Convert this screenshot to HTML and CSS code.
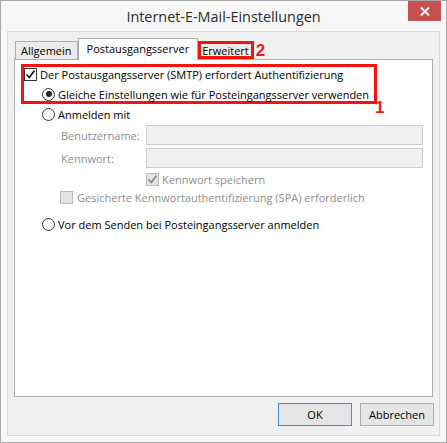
FILE: index.html
```html
<!DOCTYPE html>
<html lang="de">
    <head>
        <meta charset="UTF-8" />
        <title>Internet-E-Mail-Einstellungen</title>
        <link rel="stylesheet" href="styles.css">
    </head>
    <body>
        <div class="fenster">
            <div class="titel">
                <span></span>
                <span class="titel-text">Internet-E-Mail-Einstellungen</span>
                <span class="schliessen">
                    <svg width="10" height="9" viewBox="0 0 10 9"><path d="M1 0.5 L9 8.5 M9 0.5 L1 8.5" stroke="#fff" stroke-width="1.8" fill="none"/></svg>
                </span>
            </div>
            <div class="inhalt">
                <div class="reiter">
                    <div class="tab">Allgemein</div>
                    <div class="tab aktiv">Postausgangsserver</div>
                    <div class="tab markiert">Erweitert</div>
                    <span class="nummer nummer-2">2</span>
                </div>

                <div class="seite">
                    <div class="rahmen">
                        <div class="zeile">
                            <span class="check an"><svg width="11" height="11" viewBox="0 0 11 11"><path d="M1.5 5.5 L4.3 8.5 L9.5 1.5" stroke="#111" stroke-width="1.7" fill="none"/></svg></span>
                            Der Postausgangsserver (SMTP) erfordert Authentifizierung
                        </div>
                        <div class="zeile einzug">
                            <span class="radio an"></span>
                            Gleiche Einstellungen wie für Posteingangsserver verwenden
                        </div>
                        <span class="nummer nummer-1">1</span>
                    </div>

                    <div class="zeile option">
                        <span class="radio"></span>
                        Anmelden mit
                    </div>

                    <div class="feld erstes">
                        <span class="feld-name">Benutzername:</span>
                        <span class="eingabe"></span>
                    </div>
                    <div class="feld">
                        <span class="feld-name">Kennwort:</span>
                        <span class="eingabe"></span>
                    </div>

                    <div class="zeile inaktiv speichern">
                        <span class="check aus-grau"><svg width="11" height="11" viewBox="0 0 11 11"><path d="M1.5 5.5 L4.3 8.5 L9.5 1.5" stroke="#8a8a8a" stroke-width="1.7" fill="none"/></svg></span>
                        Kennwort speichern
                    </div>
                    <div class="zeile inaktiv spa">
                        <span class="check aus-grau"></span>
                        Gesicherte Kennwortauthentifizierung (SPA) erforderlich
                    </div>

                    <div class="zeile option vorher">
                        <span class="radio"></span>
                        Vor dem Senden bei Posteingangsserver anmelden
                    </div>
                </div>

                <div class="knoepfe">
                    <button class="knopf standard">OK</button>
                    <button class="knopf">Abbrechen</button>
                </div>
            </div>
        </div>
    </body>
</html>
```

FILE: styles.css
```css
body {
    margin: 0;
    font-family: "Open Sans", "Noto Sans", sans-serif;
    font-size: 11px;
    background: #fff;
}

.fenster {
    width: 447px;
    height: 443px;
    box-sizing: border-box;
    border: 1px solid #a9a9a9;
    background: #f7f7f7;
    padding: 0 6px 6px 6px;
    display: flex;
    flex-direction: column;
}

.titel {
    height: 30px;
    display: grid;
    grid-template-columns: 1fr auto 1fr;
    align-items: start;
}
.titel-text {
    font-size: 14.4px;
    color: #2b2b2b;
    line-height: 30px;
    padding-top: 1px;
}
.schliessen {
    justify-self: end;
    margin-right: -1px;
    width: 33px;
    height: 20px;
    background: #c75050;
    display: flex;
    align-items: center;
    justify-content: center;
}

.inhalt {
    flex: 1;
    border: 1px solid #d9d9d9;
    background: #f0f0f0;
    display: flex;
    flex-direction: column;
}

/* Reiter */
.reiter {
    display: flex;
    align-items: flex-end;
    padding: 6px 0 0 7px;
    height: 21px;
}
.tab {
    height: 18px;
    line-height: 17px;
    padding: 0 5px;
    box-sizing: border-box;
    border: 1px solid #acacac;
    border-bottom: none;
    background: #ececec;
    white-space: nowrap;
}
.tab + .tab {
    border-left: none;
}
.tab.aktiv {
    height: 22px;
    line-height: 19px;
    padding: 0 8px;
    margin-bottom: -1px;
    background: #fff;
    border-left: 1px solid #acacac;
    position: relative;
    z-index: 1;
}
.tab.aktiv + .tab {
    border-left: none;
}
.tab.markiert {
    padding: 0 4px;
    outline: 3px solid #f01414;
    outline-offset: -3px;
}

.nummer {
    color: #ea1a1a;
    font-family: "Liberation Sans", Arial, sans-serif;
    font-weight: bold;
    font-size: 17px;
    line-height: 13px;
}
.nummer-2 {
    margin: 0 0 2px 2px;
}

/* Seite */
.seite {
    flex: 1;
    margin: 0 6px;
    background: #fff;
    border: 1px solid #acacac;
    display: flex;
    flex-direction: column;
}

.rahmen {
    position: relative;
    margin: 4px 0 0 6px;
    width: 356px;
    height: 40px;
    box-sizing: border-box;
    border: 3px solid #f01414;
}
.nummer-1 {
    position: absolute;
    left: calc(100% + 1px);
    top: 34px;
}

.zeile {
    display: flex;
    align-items: center;
    height: 14px;
    white-space: nowrap;
    color: #000;
}
.zeile.einzug {
    margin-top: 6px;
    padding-left: 18px;
}
.zeile.option {
    margin-left: 27px;
    margin-top: 3px;
}
.zeile.vorher {
    margin-top: 13px;
}
.zeile.inaktiv {
    color: #8e8e8e;
    margin-top: 4px;
}
.zeile.speichern {
    margin-left: 131px;
}
.zeile.spa {
    margin-left: 45px;
}
.zeile.spa .check {
    margin-right: 4px;
}

.check {
    width: 13px;
    height: 13px;
    box-sizing: border-box;
    border: 1px solid #333;
    background: #fff;
    margin-right: 3px;
    display: flex;
    align-items: center;
    justify-content: center;
    flex-shrink: 0;
}
.check.aus-grau {
    border-color: #bcbcbc;
    background: #e3e3e3;
}

.radio {
    width: 13px;
    height: 13px;
    box-sizing: border-box;
    border: 1px solid #333;
    border-radius: 50%;
    background: #fff;
    margin-right: 3px;
    display: flex;
    align-items: center;
    justify-content: center;
    flex-shrink: 0;
}
.radio.an::after {
    content: "";
    width: 6px;
    height: 6px;
    border-radius: 50%;
    background: #222;
}

.feld {
    display: flex;
    align-items: center;
    height: 20px;
    margin-top: 3px;
    margin-left: 46px;
    color: #8e8e8e;
}
.feld.erstes {
    margin-top: 4px;
}
.feld-name {
    width: 85px;
}
.eingabe {
    width: 277px;
    height: 20px;
    box-sizing: border-box;
    border: 1px solid #c9ced6;
    background: #f0f0f0;
}

/* Knoepfe */
.knoepfe {
    display: flex;
    justify-content: flex-end;
    gap: 8px;
    padding: 6px 5px 9px 0;
}
.knopf {
    width: 74px;
    height: 23px;
    font-family: "Open Sans", "Noto Sans", sans-serif;
    font-size: 11px;
    color: #000;
    background: #e5e5e5;
    border: 1px solid #acacac;
    padding: 0;
}
.knopf.standard {
    border-color: #3c8fe0;
}
```
